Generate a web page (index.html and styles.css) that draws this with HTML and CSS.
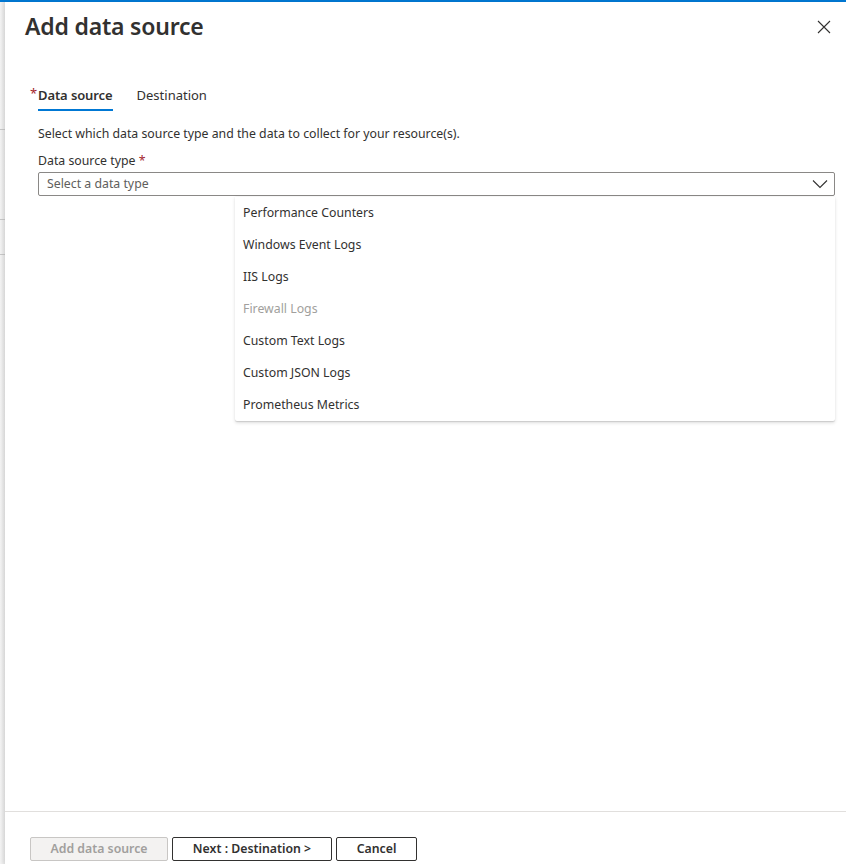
FILE: index.html
```html
<!DOCTYPE html>
<html>
<head>
<meta charset="utf-8">
<link rel="stylesheet" href="styles.css">
</head>
<body>
<div class="topbar"></div>
<div class="wrap">
  <div class="strip">
    <div class="strip-a"></div>
    <div class="strip-b"></div>
    <div class="strip-c"></div>
  </div>
  <div class="panel">
    <div class="header">
      <h1 class="title">Add data source</h1>
      <button class="close" aria-label="Close">
        <svg width="14" height="14" viewBox="0 0 14 14"><path d="M1 1 L13 13 M13 1 L1 13" stroke="#323130" stroke-width="1.1" fill="none"/></svg>
      </button>
    </div>
    <div class="content">
      <div class="tabs">
        <div class="tab active"><span class="req">*</span><span class="tab-label">Data source</span></div>
        <div class="tab"><span class="tab-label">Destination</span></div>
      </div>
      <p class="desc">Select which data source type and the data to collect for your resource(s).</p>
      <label class="field-label">Data source type <span class="star">*</span></label>
      <div class="select-wrap">
        <div class="select">
          <span class="placeholder">Select a data type</span>
          <svg class="chev" width="16" height="10" viewBox="0 0 16 10"><path d="M1 1.5 L8 8.5 L15 1.5" stroke="#323130" stroke-width="1.1" fill="none"/></svg>
        </div>
        <ul class="menu">
          <li>Performance Counters</li>
          <li>Windows Event Logs</li>
          <li>IIS Logs</li>
          <li class="disabled">Firewall Logs</li>
          <li>Custom Text Logs</li>
          <li>Custom JSON Logs</li>
          <li>Prometheus Metrics</li>
        </ul>
      </div>
    </div>
    <div class="footer">
      <button class="btn btn-disabled">Add data source</button>
      <button class="btn btn-next">Next : Destination &gt;</button>
      <button class="btn btn-cancel">Cancel</button>
    </div>
  </div>
</div>
</body>
</html>
```

FILE: styles.css
```css
* { box-sizing: border-box; }
html, body { margin: 0; padding: 0; }
body {
  font-family: "Noto Sans", "Open Sans", sans-serif;
  color: #323130;
  background: #fff;
  width: 846px;
  height: 864px;
  overflow: hidden;
}
.topbar { height: 2px; background: #0078d4; }
.wrap { display: flex; height: 862px; }
.strip {
  width: 5px;
  background: linear-gradient(to right, #f4f4f4, #e6e6e6);
  display: flex;
  flex-direction: column;
}
.strip-a { height: 128px; border-bottom: 1px solid #c8c8c8; }
.strip-b { height: 90px; border-bottom: 1px solid #c8c8c8; }
.strip-c { height: 35px; border-bottom: 1px solid #c8c8c8; }
.panel {
  flex: 1;
  display: flex;
  flex-direction: column;
  background: #fff;
  box-shadow: -2px 0 4px rgba(0,0,0,0.08);
  position: relative;
}
.header {
  display: flex;
  justify-content: space-between;
  align-items: flex-start;
  padding: 8px 15px 0 20px;
}
.title {
  margin: 0;
  font-size: 23px;
  font-weight: 600;
  line-height: 32px;
  color: #323130;
  letter-spacing: -0.2px;
}
.close {
  background: none;
  border: none;
  padding: 0;
  margin-top: 10px;
  width: 14px;
  height: 14px;
  display: flex;
}
.content {
  flex: 1;
  padding: 0 11px 0 33px;
}
.tabs {
  display: flex;
  gap: 24px;
  margin-top: 43px;
  margin-left: -8px;
}
.tab {
  display: flex;
  align-items: flex-start;
  font-size: 13px;
  line-height: 20px;
  color: #323130;
}
.tab .req { color: #a4262c; width: 8px; font-size: 13px; line-height: 16px; text-align: left; }
.tab-label { padding-bottom: 4px; border-bottom: 2px solid transparent; }
.tab.active .tab-label { font-weight: 600; border-bottom-color: #0078d4; letter-spacing: -0.1px; }
.desc {
  margin: 13px 0 0;
  font-size: 12.3px;
  line-height: 20px;
}
.field-label {
  display: block;
  margin-top: 9px;
  font-size: 12.3px;
  line-height: 16px;
}
.star { color: #a4262c; }
.select-wrap { position: relative; margin-top: 3px; }
.select {
  height: 24px;
  border: 1px solid #8a8886;
  border-radius: 2px;
  display: flex;
  align-items: center;
  justify-content: space-between;
  padding: 0 6px 0 8px;
}
.placeholder { font-size: 12.3px; color: #605e5c; line-height: 20px; }
.menu {
  position: absolute;
  top: 25px;
  left: 197px;
  right: 0;
  margin: 0;
  padding: 0;
  list-style: none;
  background: #fff;
  box-shadow: 0 1.6px 3.6px rgba(0,0,0,0.13), 0 0.3px 0.9px rgba(0,0,0,0.11);
  border-radius: 0 0 2px 2px;
}
.menu li {
  height: 32px;
  line-height: 32px;
  padding-left: 8px;
  font-size: 12.3px;
  color: #323130;
}
.menu li.disabled { color: #a19f9d; }
.footer {
  height: 53px;
  border-top: 1px solid #e1dfdd;
  display: flex;
  gap: 4px;
  padding: 25px 0 0 25px;
}
.btn {
  height: 24px;
  border-radius: 2px;
  font-family: inherit;
  font-size: 12.3px;
  font-weight: 600;
  padding: 0;
  white-space: nowrap;
  background: #fff;
  border: 1px solid #323130;
  color: #323130;
  line-height: 20px;
}
.btn-disabled { width: 138px; background: #f3f2f1; border-color: #c8c6c4; color: #a19f9d; }
.btn-next { width: 160px; }
.btn-cancel { width: 81px; }
```
